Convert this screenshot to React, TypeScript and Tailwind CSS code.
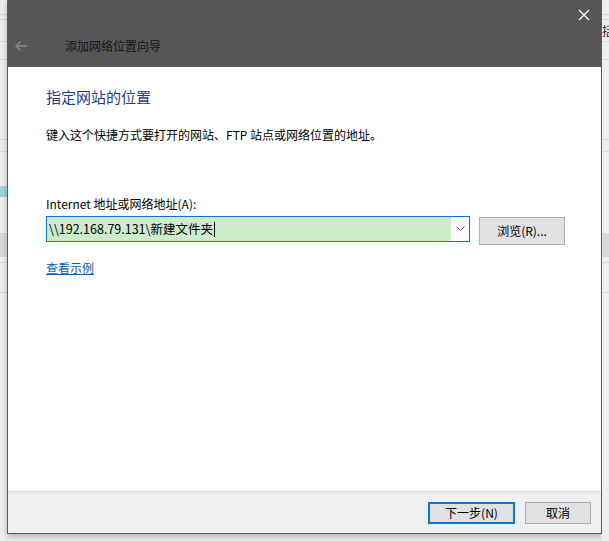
const font = { fontFamily: '"Noto Sans CJK SC", "Liberation Sans", sans-serif' };

const SideStrip = ({ right }: { right?: boolean }) => (
  <div className="flex flex-col h-full bg-[#eeeeee] overflow-hidden">
    <div className="h-[15px] border-b border-[#d6d6d6]" />
    <div className="h-[5px] border-b border-[#d6d6d6]" />
    <div className="h-[22px] border-b border-[#dcdcdc] text-[12px] leading-[22px] text-[#222] whitespace-nowrap">
      {right ? "括" : ""}
    </div>
    <div className="h-[18px] border-b border-[#dcdcdc]" />
    <div className="h-[80px] border-b border-[#dcdcdc]" />
    <div className="h-[12px] border-b border-[#dcdcdc]" />
    <div className="h-[34px]" />
    {!right && <div className="h-[11px] bg-[#9fd3d8]" />}
    {right && <div className="h-[11px]" />}
    <div className="h-[36px]" />
    <div className="h-[24px] bg-[#d9d9d9]" />
    <div className="h-[6px] border-b border-[#d6d6d6]" />
    <div className="h-[30px] border-b border-[#d6d6d6]" />
    <div className="flex-1" />
  </div>
);

export default function App() {
  return (
    <div className="w-[609px] h-[541px] flex bg-[#e9e9e9] overflow-hidden" style={font}>
      <div className="w-[7px] shrink-0 h-full">
        <SideStrip />
      </div>

      <div className="w-[595px] shrink-0 h-[534px] flex flex-col border-x border-b border-[#5a5a5a] bg-white shadow-[0_2px_6px_rgba(0,0,0,0.25)]">
        {/* Title bar */}
        <div className="h-[67px] bg-[#565656] flex flex-col">
          <div className="flex justify-end pt-[8px] pr-[10px]">
            <svg width="14" height="14" viewBox="0 0 14 14">
              <path d="M2 2 L12 12 M12 2 L2 12" stroke="#ffffff" strokeWidth="1.2" />
            </svg>
          </div>
          <div className="flex items-center mt-[15px] h-[18px]">
            <svg width="14" height="12" viewBox="0 0 14 12" className="ml-[6px]">
              <path d="M13 6 H2 M6.5 1.5 L2 6 L6.5 10.5" stroke="#8a8a8a" strokeWidth="1.4" fill="none" />
            </svg>
            <span className="ml-[37px] text-[12px] text-[#161616] leading-[18px]">添加网络位置向导</span>
          </div>
        </div>

        {/* Body */}
        <div className="flex-1 flex flex-col pl-[38px] pr-[36px]">
          <h1 className="mt-[20px] text-[15px] leading-[20px] text-[#1e3c8c]">指定网站的位置</h1>
          <p className="mt-[20px] text-[12px] leading-[16px] text-black">
            键入这个快捷方式要打开的网站、FTP 站点或网络位置的地址。
          </p>
          <label className="mt-[53px] text-[12px] leading-[16px] text-black">Internet 地址或网络地址(A):</label>
          <div className="mt-[4px] flex items-start">
            <div className="w-[424px] h-[26px] border border-[#0078d7] flex items-stretch">
              <div className="flex-1 bg-[#cdecca] flex items-center pl-[2px] text-[12.5px] text-black">
                <span>\\192.168.79.131\新建文件夹</span>
                <span className="w-px h-[15px] bg-black ml-px" />
              </div>
              <div className="w-[18px] flex items-center justify-center bg-white">
                <svg width="9" height="6" viewBox="0 0 9 6">
                  <path d="M0.5 0.5 L4.5 4.5 L8.5 0.5" stroke="#555" strokeWidth="1" fill="none" />
                </svg>
              </div>
            </div>
            <button className="ml-[9px] mt-px w-[86px] h-[28px] bg-[#e1e1e1] border border-[#adadad] text-[12px] text-black">
              浏览(R)...
            </button>
          </div>
          <a className="mt-[15px] text-[12px] leading-[16px] text-[#0063b1] underline w-fit">查看示例</a>
        </div>

        {/* Footer */}
        <div className="h-[42px] bg-[#f0f0f0] border-t border-[#dfdfdf] flex items-center justify-end pr-[10px] gap-[10px]">
          <button className="w-[87px] h-[22px] bg-[#e1e1e1] border-2 border-[#0078d7] text-[12px] text-black">
            下一步(N)
          </button>
          <button className="w-[66px] h-[22px] bg-[#e1e1e1] border border-[#adadad] text-[12px] text-black">
            取消
          </button>
        </div>
      </div>

      <div className="flex-1 min-w-0 h-full">
        <SideStrip right />
      </div>
    </div>
  );
}
